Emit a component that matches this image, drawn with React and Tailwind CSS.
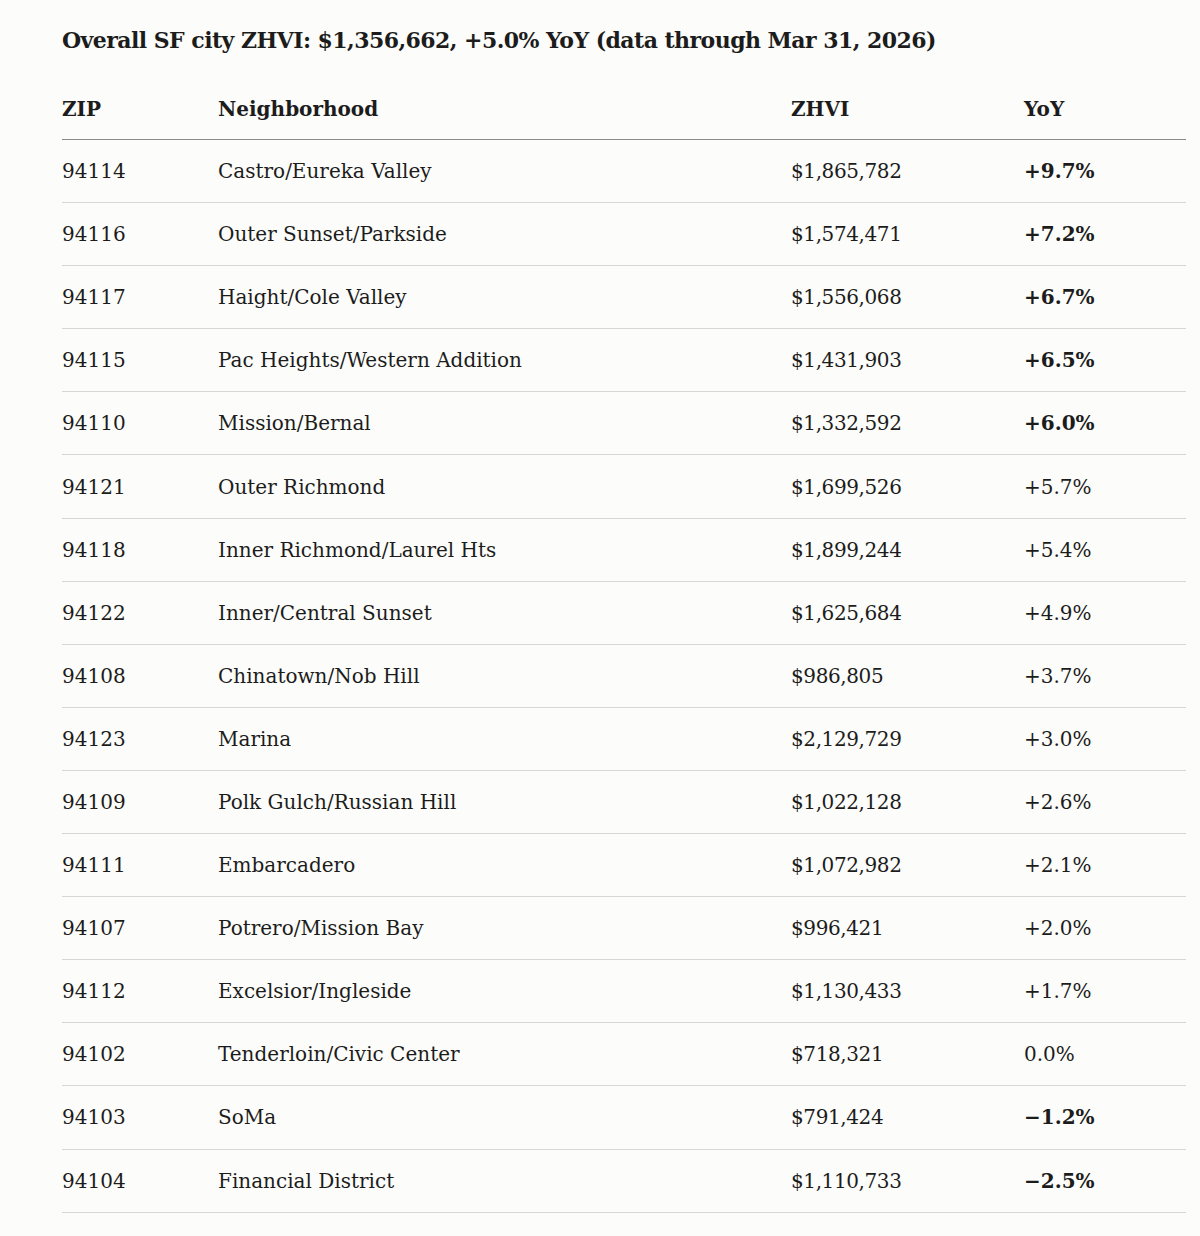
import React from "react";

const rows = [
  ["94114", "Castro/Eureka Valley", "$1,865,782", "+9.7%", true],
  ["94116", "Outer Sunset/Parkside", "$1,574,471", "+7.2%", true],
  ["94117", "Haight/Cole Valley", "$1,556,068", "+6.7%", true],
  ["94115", "Pac Heights/Western Addition", "$1,431,903", "+6.5%", true],
  ["94110", "Mission/Bernal", "$1,332,592", "+6.0%", true],
  ["94121", "Outer Richmond", "$1,699,526", "+5.7%", false],
  ["94118", "Inner Richmond/Laurel Hts", "$1,899,244", "+5.4%", false],
  ["94122", "Inner/Central Sunset", "$1,625,684", "+4.9%", false],
  ["94108", "Chinatown/Nob Hill", "$986,805", "+3.7%", false],
  ["94123", "Marina", "$2,129,729", "+3.0%", false],
  ["94109", "Polk Gulch/Russian Hill", "$1,022,128", "+2.6%", false],
  ["94111", "Embarcadero", "$1,072,982", "+2.1%", false],
  ["94107", "Potrero/Mission Bay", "$996,421", "+2.0%", false],
  ["94112", "Excelsior/Ingleside", "$1,130,433", "+1.7%", false],
  ["94102", "Tenderloin/Civic Center", "$718,321", "0.0%", false],
  ["94103", "SoMa", "$791,424", "\u22121.2%", true],
  ["94104", "Financial District", "$1,110,733", "\u22122.5%", true],
];

export default function App() {
  return (
    <div
      className="w-[1200px] h-[1236px] bg-[#fcfcfa] text-[#1c1c1c] pl-[62px] pr-[14px]"
      style={{ fontFamily: '"DejaVu Serif", "Liberation Serif", serif' }}
    >
      <h1 className="h-[78px] flex items-center text-[22px] font-bold pt-[2px] tracking-[-0.55px]">
        Overall SF city ZHVI: $1,356,662, +5.0% YoY (data through Mar 31, 2026)
      </h1>
      <div className="grid grid-cols-[156px_573px_233px_1fr] items-center h-[62px] border-b border-[#8a8a8a] text-[20px] font-bold">
        <div>ZIP</div>
        <div>Neighborhood</div>
        <div>ZHVI</div>
        <div>YoY</div>
      </div>
      {rows.map(([zip, name, val, yoy, bold]) => (
        <div
          key={zip}
          className="grid grid-cols-[156px_573px_233px_1fr] items-center h-[63.1px] border-b border-[#d6d6d4] text-[20px]"
        >
          <div>{zip}</div>
          <div>{name}</div>
          <div className="tracking-[-0.4px]">{val}</div>
          <div className={bold ? "font-bold" : ""}>{yoy}</div>
        </div>
      ))}
    </div>
  );
}
